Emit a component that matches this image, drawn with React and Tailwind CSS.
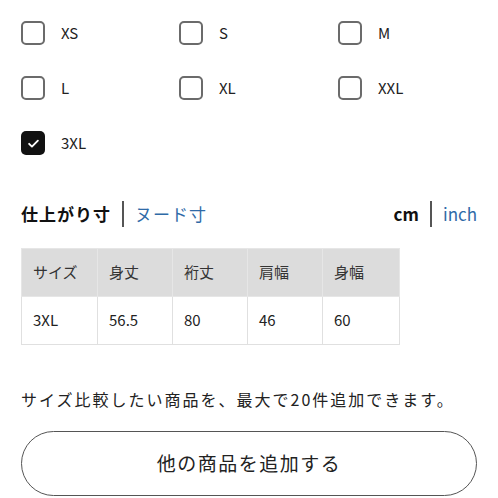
import React, { useState } from 'react';

const sizes = ['XS', 'S', 'M', 'L', 'XL', 'XXL', '3XL'];

const headers = ['サイズ', '身丈', '裄丈', '肩幅', '身幅'];
const row = ['3XL', '56.5', '80', '46', '60'];

const SizeCheckbox = ({ label, checked, onToggle }) => (
    <label className="flex items-center h-[24px] cursor-pointer">
        <span
            onClick={onToggle}
            className={`w-[24px] h-[24px] rounded-[5px] flex items-center justify-center ${
                checked ? 'bg-[#111]' : 'border-2 border-[#6b6b6b] bg-white'
            }`}
        >
            {checked && (
                <svg width="15" height="15" viewBox="0 0 24 24" fill="none">
                    <path d="M5 12.5l4.5 4.5L19 7.5" stroke="#fff" strokeWidth="3" strokeLinecap="round" strokeLinejoin="round" />
                </svg>
            )}
        </span>
        <span className="ml-[16px] text-[15px] text-[#222]">{label}</span>
    </label>
);

const App = () => {
    const [selected, setSelected] = useState(['3XL']);

    const toggle = (size) => {
        setSelected(selected.includes(size) ? selected.filter(s => s !== size) : [...selected, size]);
    };

    return (
        <div className="w-[498px] h-[498px] overflow-hidden bg-white px-[21px] pt-[21px] font-['Noto_Sans_CJK_JP','Noto_Sans',sans-serif] text-[#222]">
            {/* Size checkboxes */}
            <div className="grid grid-cols-[158px_159px_1fr] gap-y-[31px]">
                {sizes.map((size) => (
                    <SizeCheckbox
                        key={size}
                        label={size}
                        checked={selected.includes(size)}
                        onToggle={() => toggle(size)}
                    />
                ))}
            </div>

            {/* Measurement type / unit */}
            <div className="flex items-center justify-between mt-[46px] h-[26px]">
                <div className="flex items-center">
                    <span className="text-[17px] font-bold tracking-[1px] text-[#111]">仕上がり寸</span>
                    <span className="w-[2px] h-[26px] bg-[#555] mx-[11px]"></span>
                    <span className="text-[17px] tracking-[1px] text-[#2f6aa7]">ヌード寸</span>
                </div>
                <div className="flex items-center">
                    <span className="text-[17px] font-bold text-[#111]">cm</span>
                    <span className="w-[2px] h-[26px] bg-[#555] mx-[11px]"></span>
                    <span className="text-[17px] text-[#2f6aa7]">inch</span>
                </div>
            </div>

            {/* Size table */}
            <table className="mt-[21px] border-collapse text-[15px]">
                <thead>
                    <tr>
                        {headers.map((h, i) => (
                            <th
                                key={h}
                                className={`h-[48px] bg-[#dcdcdc] border border-[#e6e6e6] text-left font-normal px-[11px] text-[#333] ${
                                    i === 0 ? 'w-[76px]' : i === 4 ? 'w-[77px]' : 'w-[75px]'
                                }`}
                            >
                                {h}
                            </th>
                        ))}
                    </tr>
                </thead>
                <tbody>
                    <tr>
                        {row.map((v, i) => (
                            <td key={i} className="h-[48px] border border-[#e0e0e0] px-[11px] text-[#222]">
                                {v}
                            </td>
                        ))}
                    </tr>
                </tbody>
            </table>

            {/* Note */}
            <p className="mt-[42px] text-[16px] tracking-[2px] text-[#222] leading-[24px]">
                サイズ比較したい商品を、最大で20件追加できます。
            </p>

            {/* Add button */}
            <button className="mt-[20px] w-full h-[65px] rounded-full border-[1.5px] border-[#555] bg-white text-[19px] tracking-[1.5px] text-[#222]">
                他の商品を追加する
            </button>
        </div>
    );
};

export default App;
